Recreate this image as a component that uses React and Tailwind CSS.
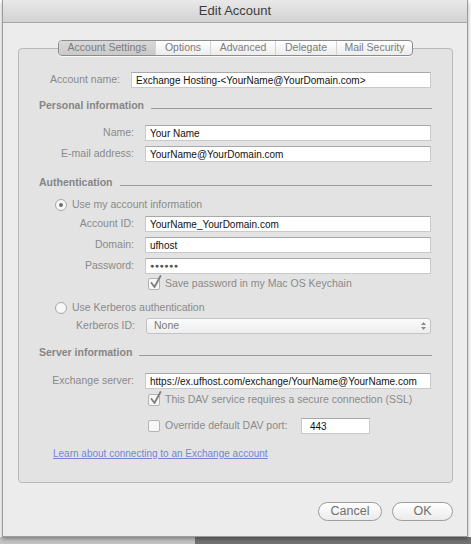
import React from 'react';

function TextInput({ value, className = '' }) {
  return (
    <div
      className={`h-[16px] bg-white border border-[#c9c9c9] border-t-[#a9a9a9] flex items-center px-[4px] text-[10px] text-[#111] whitespace-nowrap overflow-hidden ${className}`}
    >
      {value}
    </div>
  );
}

function Label({ children, className = '' }) {
  return <div className={`text-right text-[10.5px] text-[#8a8a8a] pr-[11px] shrink-0 ${className}`}>{children}</div>;
}

function Heading({ children, className = '' }) {
  return (
    <div className={`h-[16px] flex items-center pl-[20px] pr-[20px] ${className}`}>
      <span className="text-[10.5px] font-bold text-[#868686] pr-[7px]">{children}</span>
      <div className="flex-1 h-px bg-[#9a9a9a] mt-[4px]"></div>
    </div>
  );
}

function CheckBox({ checked }) {
  return (
    <div className="relative w-[12px] h-[12px] bg-[#f7f7f7] border border-[#b3b3b3] rounded-[2px] shrink-0">
      {checked && (
        <svg className="absolute -top-[4px] left-[1px]" width="12" height="14" viewBox="0 0 12 14">
          <path d="M1.5 8 L4.5 12 L10.5 1" fill="none" stroke="#7d7d7d" strokeWidth="1.8" strokeLinecap="round" strokeLinejoin="round" />
        </svg>
      )}
    </div>
  );
}

function Radio({ checked }) {
  return (
    <div className="w-[12px] h-[12px] rounded-full bg-[#f7f7f7] border border-[#a9a9a9] flex items-center justify-center shrink-0">
      {checked && <div className="w-[4px] h-[4px] rounded-full bg-[#6f6f6f]"></div>}
    </div>
  );
}

export default function App() {
  const tabs = [
    { name: 'Account Settings', w: 'w-[96px]' },
    { name: 'Options', w: 'w-[55px]' },
    { name: 'Advanced', w: 'w-[65px]' },
    { name: 'Delegate', w: 'w-[61px]' },
    { name: 'Mail Security', w: 'w-[76px]' },
  ];

  return (
    <div className="w-[471px] h-[544px] bg-white font-['Liberation_Sans',Arial,sans-serif] overflow-hidden">
      {/* window */}
      <div className="ml-[2px] w-[466px] h-[537px] border-x border-b border-[#9c9c9c] bg-[#ececec] flex flex-col shadow-[0_2px_4px_rgba(0,0,0,0.35)] relative z-10">
        {/* title bar */}
        <div className="h-[23px] shrink-0 bg-gradient-to-b from-[#e9e9e9] to-[#d2d2d2] border-b border-[#a5a5a5] flex items-center justify-center">
          <span className="text-[13px] text-[#3c3c3c]">Edit Account</span>
        </div>

        {/* tab box */}
        <div className="ml-[15px] mt-[25px] w-[435px] h-[435px] border border-[#b9b9b9] rounded-[4px] bg-[#e3e3e3] flex flex-col">
          <div className="-mt-[9px] h-[16px] flex justify-center">
            <div className="flex h-[16px] border border-[#8c8c8c] rounded-[4px] overflow-hidden bg-gradient-to-b from-[#ffffff] to-[#ececec] shadow-[0_1px_0_rgba(255,255,255,0.8)]">
              {tabs.map((t, i) => (
                <div
                  key={t.name}
                  className={`${t.w} flex items-center justify-center text-[10.5px] text-[#7c7c7c] ${i > 0 ? 'border-l border-[#d4d4d4]' : ''} ${i === 0 ? 'bg-gradient-to-b from-[#d9d9d9] to-[#c9c9c9] text-[#6e6e6e]' : ''}`}
                >
                  {t.name}
                </div>
              ))}
            </div>
          </div>

          {/* account name */}
          <div className="mt-[16px] flex items-center">
            <Label className="w-[112px]">Account name:</Label>
            <TextInput value="Exchange Hosting-<YourName@YourDomain.com>" className="w-[300px]" />
          </div>

          <Heading className="mt-[10px]">Personal information</Heading>

          <div className="mt-[11px] flex items-center">
            <Label className="w-[126px]">Name:</Label>
            <TextInput value="Your Name" className="w-[286px]" />
          </div>
          <div className="mt-[5px] flex items-center">
            <Label className="w-[126px]">E-mail address:</Label>
            <TextInput value="YourName@YourDomain.com" className="w-[286px]" />
          </div>

          <Heading className="mt-[13px]">Authentication</Heading>

          <div className="mt-[6px] h-[16px] flex items-center pl-[36px] gap-[5px]">
            <Radio checked />
            <span className="text-[10.5px] text-[#8a8a8a]">Use my account information</span>
          </div>

          <div className="mt-[3px] flex items-center">
            <Label className="w-[126px]">Account ID:</Label>
            <TextInput value="YourName_YourDomain.com" className="w-[286px]" />
          </div>
          <div className="mt-[5px] flex items-center">
            <Label className="w-[126px]">Domain:</Label>
            <TextInput value="ufhost" className="w-[286px]" />
          </div>
          <div className="mt-[5px] flex items-center">
            <Label className="w-[126px]">Password:</Label>
            <TextInput value={<span className="text-[7px] tracking-[0.5px] text-[#555]">●●●●●●</span>} className="w-[286px]" />
          </div>
          <div className="mt-[2px] h-[16px] flex items-center pl-[129px] gap-[5px]">
            <CheckBox checked />
            <span className="text-[10.5px] text-[#8a8a8a]">Save password in my Mac OS Keychain</span>
          </div>

          <div className="mt-[8px] h-[16px] flex items-center pl-[36px] gap-[5px]">
            <Radio />
            <span className="text-[10.5px] text-[#8a8a8a]">Use Kerberos authentication</span>
          </div>

          <div className="mt-[2px] flex items-center">
            <Label className="w-[127px]">Kerberos ID:</Label>
            <div className="w-[285px] h-[16px] border border-[#c3c3c3] rounded-[3px] bg-gradient-to-b from-[#fbfbfb] to-[#eeeeee] flex items-center justify-between pl-[7px] pr-[3px]">
              <span className="text-[10.5px] text-[#7a7a7a]">None</span>
              <svg width="7" height="10" viewBox="0 0 7 10">
                <path d="M1 4 L3.5 1 L6 4 Z" fill="#8a8a8a" />
                <path d="M1 6 L3.5 9 L6 6 Z" fill="#8a8a8a" />
              </svg>
            </div>
          </div>

          <Heading className="mt-[11px]">Server information</Heading>

          <div className="mt-[12px] flex items-center">
            <Label className="w-[126px]">Exchange server:</Label>
            <TextInput value="https://ex.ufhost.com/exchange/YourName@YourName.com" className="w-[286px]" />
          </div>
          <div className="mt-[3px] h-[16px] flex items-center pl-[129px] gap-[5px]">
            <CheckBox checked />
            <span className="text-[10.5px] text-[#8a8a8a]">This DAV service requires a secure connection (SSL)</span>
          </div>
          <div className="mt-[10px] h-[16px] flex items-center pl-[129px]">
            <CheckBox />
            <span className="ml-[5px] w-[136px] text-[10.5px] text-[#8a8a8a]">Override default DAV port:</span>
            <TextInput value="443" className="w-[69px] pl-[8px]" />
          </div>

          <div className="mt-[11px] h-[16px] flex items-center pl-[34px]">
            <span className="text-[10px] text-[#7585d6] underline">Learn about connecting to an Exchange account</span>
          </div>
        </div>

        {/* buttons */}
        <div className="mt-[19px] flex justify-end gap-[10px] pr-[14px]">
          <div className="w-[64px] h-[19px] rounded-full border border-[#9d9d9d] bg-gradient-to-b from-[#ffffff] to-[#ebebeb] flex items-center justify-center text-[12.5px] text-[#6f6f6f]">
            Cancel
          </div>
          <div className="w-[61px] h-[19px] rounded-full border border-[#9d9d9d] bg-gradient-to-b from-[#ffffff] to-[#ebebeb] flex items-center justify-center text-[12.5px] text-[#6f6f6f]">
            OK
          </div>
        </div>
      </div>

      {/* desktop strip below window */}
      <div className="flex h-[7px]">
        <div className="w-[195px] bg-[#c4c4c4]"></div>
        <div className="flex-1 bg-[#737373]"></div>
      </div>
    </div>
  );
}
